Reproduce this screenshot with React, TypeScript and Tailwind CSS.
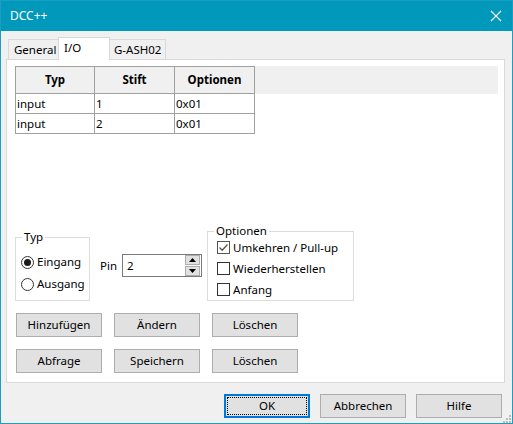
import React from "react";

const font = { fontFamily: '"Noto Sans", "Liberation Sans", sans-serif' };

function Btn({ label, focused }: { label: string; focused?: boolean }) {
  if (focused) {
    return (
      <div className="w-[86px] h-[24px] border-2 border-[#0078d7] bg-[#e1e1e1] p-[1px]">
        <div className="w-full h-full border border-dotted border-black flex items-center justify-center text-black">
          {label}
        </div>
      </div>
    );
  }
  return (
    <div className="w-[86px] h-[24px] border border-[#adadad] bg-[#e1e1e1] flex items-center justify-center text-black">
      {label}
    </div>
  );
}

function Radio({ checked, label }: { checked?: boolean; label: string }) {
  return (
    <div className="h-[22px] flex items-center">
      <svg width="13" height="13" viewBox="0 0 13 13" className="ml-[5px]">
        <circle cx="6.5" cy="6.5" r="6" fill="#fff" stroke="#333" strokeWidth="1" />
        {checked && <circle cx="6.5" cy="6.5" r="3.5" fill="#1a1a1a" />}
      </svg>
      <span className="ml-[3px]">{label}</span>
    </div>
  );
}

function Check({ checked, label }: { checked?: boolean; label: string }) {
  return (
    <div className="h-[21px] flex items-center">
      <svg width="13" height="13" viewBox="0 0 13 13" className="ml-[9px]">
        <rect x="0.5" y="0.5" width="12" height="12" fill="#fff" stroke={checked ? "#555" : "#333"} />
        {checked && (
          <path d="M2.5 6.5 L5.2 9.2 L10.5 3.5" fill="none" stroke="#555" strokeWidth="1.3" />
        )}
      </svg>
      <span className="ml-[3px]">{label}</span>
    </div>
  );
}

export default function App() {
  const rows = [
    { typ: "input", pin: "1", opt: "0x01" },
    { typ: "input", pin: "2", opt: "0x01" },
  ];

  return (
    <div
      className="w-[513px] h-[424px] border border-[#1a9fc2] bg-[#f0f0f0] flex flex-col text-[11.5px] text-black overflow-hidden"
      style={font}
    >
      {/* title bar */}
      <div className="h-[30px] bg-[#0099bc] flex items-center justify-between pl-[9px] pr-[9px] shrink-0">
        <span className="text-white text-[12px]">DCC++</span>
        <svg width="12" height="12" viewBox="0 0 12 12" className="mr-[1px]">
          <path d="M1 1 L11 11 M11 1 L1 11" stroke="#fff" strokeWidth="1.1" />
        </svg>
      </div>

      {/* tabs */}
      <div className="flex items-end pt-[5px] pl-[7px] h-[28px] shrink-0">
        <div className="w-[50px] h-[20px] border-l border-t border-[#d9d9d9] flex items-center pl-[5px]">
          General
        </div>
        <div className="w-[52px] h-[23px] border-l border-t border-r border-[#d9d9d9] bg-white -mb-px relative z-10 pl-[5px] pt-[1px]">
          I/O
        </div>
        <div className="w-[56px] h-[20px] border-t border-r border-[#d9d9d9] flex items-center pl-[4px]">
          G-ASH02
        </div>
      </div>

      {/* panel */}
      <div className="ml-[5px] w-[499px] h-[324px] border border-[#d9d9d9] bg-white flex flex-col pl-[8px] pt-[6px] shrink-0">
        <div className="h-[164px] w-[483px]">
          <div className="flex h-[28px] bg-[#f0f0f0]">
            {["Typ", "Stift", "Optionen"].map((h, i) => (
              <div
                key={h}
                className={
                  "w-[80px] h-[28px] border-t border-r border-b border-[#a0a0a0] flex items-center justify-center font-bold " +
                  (i === 0 ? "border-l" : "")
                }
              >
                {h}
              </div>
            ))}
          </div>
          {rows.map((r, i) => (
            <div key={i} className="flex h-[20px]">
              <div className="w-[80px] border-l border-r border-b border-[#a0a0a0] pl-[1px] flex items-center">{r.typ}</div>
              <div className="w-[80px] border-r border-b border-[#a0a0a0] pl-[1px] flex items-center">{r.pin}</div>
              <div className="w-[80px] border-r border-b border-[#a0a0a0] pl-[1px] flex items-center">{r.opt}</div>
            </div>
          ))}
        </div>

        {/* controls */}
        <div className="flex items-start h-[71px]">
          <div className="relative mt-[7px] w-[75px] h-[64px] border border-[#dcdcdc] pt-[13px]">
            <span className="absolute -top-[8px] left-[6px] bg-white px-[2px] leading-[14px]">Typ</span>
            <Radio checked label="Eingang" />
            <Radio label="Ausgang" />
          </div>

          <div className="flex items-center mt-[24px] ml-[10px]">
            <span className="mr-[5px]">Pin</span>
            <div className="w-[80px] h-[23px] border border-[#7a7a7a] bg-white flex items-center">
              <span className="flex-1 pl-[4px]">2</span>
              <div className="flex flex-col w-[15px] h-[21px] mr-[1px] gap-[1px]">
                <div className="h-[10px] bg-[#e1e1e1] border border-[#adadad] flex items-center justify-center">
                  <svg width="7" height="4" viewBox="0 0 7 4"><path d="M0 4 L3.5 0 L7 4 Z" fill="#000" /></svg>
                </div>
                <div className="h-[10px] bg-[#e1e1e1] border border-[#adadad] flex items-center justify-center">
                  <svg width="7" height="4" viewBox="0 0 7 4"><path d="M0 0 L3.5 4 L7 0 Z" fill="#000" /></svg>
                </div>
              </div>
            </div>
          </div>

          <div className="relative mt-[1px] ml-[5px] w-[147px] h-[70px] border border-[#dcdcdc] pt-[5px]">
            <span className="absolute -top-[8px] left-[6px] bg-white px-[2px] leading-[14px]">Optionen</span>
            <Check checked label="Umkehren / Pull-up" />
            <Check label="Wiederherstellen" />
            <Check label="Anfang" />
          </div>
        </div>

        <div className="flex gap-[12px] ml-[1px] mt-[12px]">
          <Btn label="Hinzufügen" />
          <Btn label="Ändern" />
          <Btn label="Löschen" />
        </div>
        <div className="flex gap-[12px] ml-[1px] mt-[12px]">
          <Btn label="Abfrage" />
          <Btn label="Speichern" />
          <Btn label="Löschen" />
        </div>
      </div>

      {/* footer */}
      <div className="flex justify-end gap-[10px] mt-[11px] pr-[10px] relative">
        <Btn label="OK" focused />
        <Btn label="Abbrechen" />
        <Btn label="Hilfe" />
        <svg width="8" height="8" viewBox="0 0 8 8" className="absolute right-[1px] top-[21px]">
          {[
            [6, 0], [6, 3], [3, 3], [6, 6], [3, 6], [0, 6],
          ].map(([x, y], i) => (
            <rect key={i} x={x} y={y} width="2" height="2" fill="#bcbcbc" />
          ))}
        </svg>
      </div>
    </div>
  );
}
